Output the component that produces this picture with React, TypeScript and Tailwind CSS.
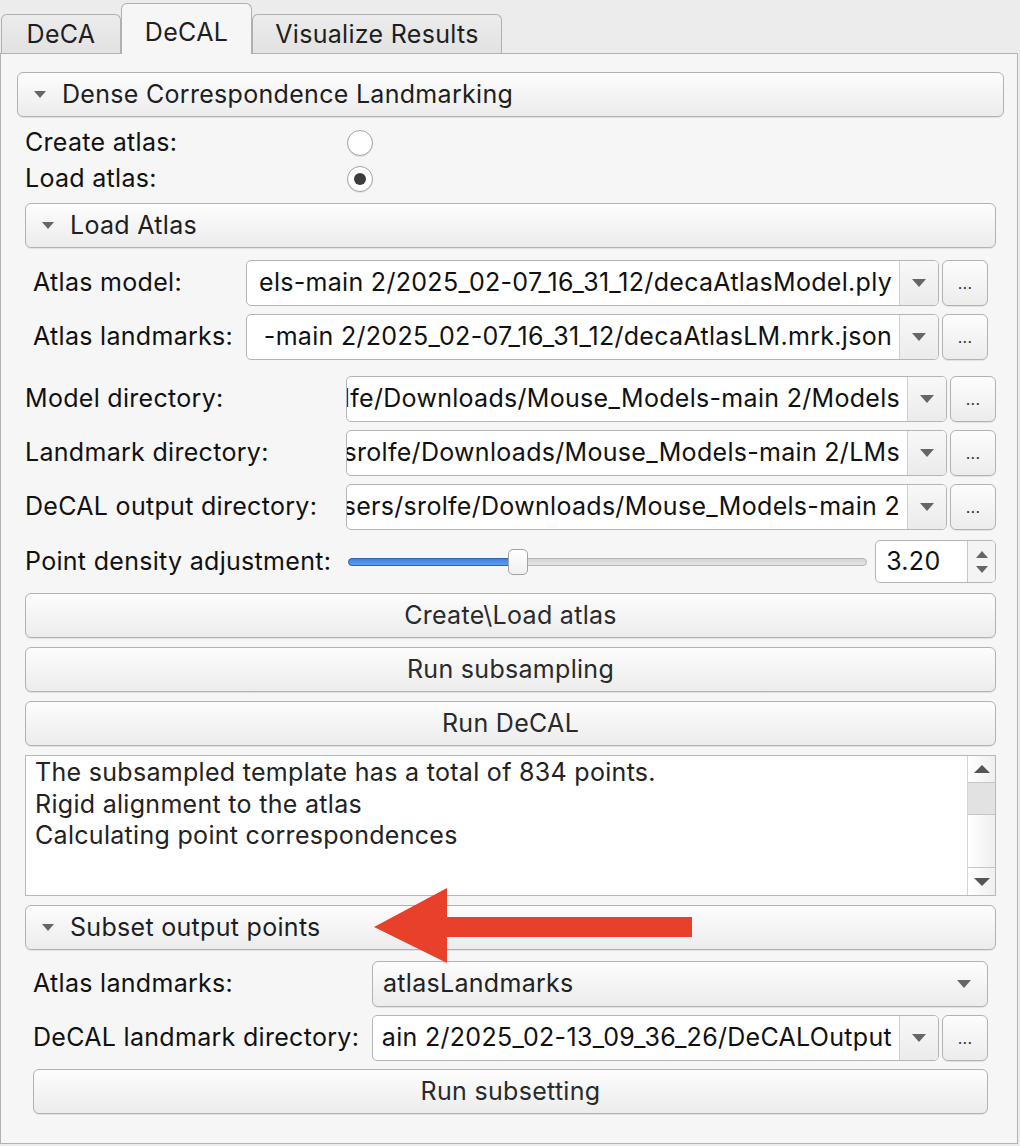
import { ReactNode } from "react";

const FONT = "font-['Inter','Liberation_Sans',sans-serif] tracking-[0.3px]";
const TXT = "text-[25px]";

const BTN =
  "border border-[#b2b2b2] rounded-[6px] bg-gradient-to-b from-[#fdfdfd] to-[#ececec] shadow-[0_1px_0_rgba(0,0,0,0.08)]";

function DownTri({ className = "" }: { className?: string }) {
  return (
    <svg width="14" height="8" viewBox="0 0 14 8" className={className}>
      <path d="M0 0 L14 0 L7 8 Z" fill="#666" />
    </svg>
  );
}

function Tab({ label, active, width }: { label: string; active?: boolean; width: string }) {
  return (
    <div
      className={`${width} flex justify-center border border-[#b0b0b0] rounded-t-[6px] ${
        active
          ? "h-[51px] bg-[#f6f6f6] border-b-0 relative z-10 -mb-px pt-[14px]"
          : "h-[39px] bg-gradient-to-b from-[#ececec] to-[#e2e2e2] border-b-0 pt-[5px]"
      }`}
    >
      <span className={`${TXT} leading-[28px] text-[#1e1e1e]`}>{label}</span>
    </div>
  );
}

function SectionHeader({ label }: { label: string }) {
  return (
    <div className={`${BTN} h-[45px] flex items-center pl-[16px] gap-[16px]`}>
      <DownTri className="w-[12px] h-[7px]" />
      <span className={`${TXT} text-[#1e1e1e]`}>{label}</span>
    </div>
  );
}

function EditCombo({ text }: { text: string }) {
  return (
    <div className="flex-1 min-w-0 h-[46px] flex border border-[#b5b5b5] rounded-[5px] bg-white overflow-hidden">
      <div className="flex-1 min-w-0 flex justify-end items-center overflow-hidden pr-[7px]">
        <span className={`shrink-0 whitespace-nowrap ${TXT} text-[#111]`}>{text}</span>
      </div>
      <div className="w-[39px] shrink-0 border-l border-[#d0d0d0] bg-gradient-to-b from-[#f8f8f8] to-[#ebebeb] flex items-center justify-center">
        <DownTri />
      </div>
    </div>
  );
}

function Dots() {
  return (
    <div className={`${BTN} w-[46px] h-[46px] shrink-0 flex items-center justify-center`}>
      <span className="text-[16px] text-[#333] leading-none">...</span>
    </div>
  );
}

function Row({ label, w, children }: { label: string; w: string; children: ReactNode }) {
  return (
    <div className="flex items-center h-[46px]">
      <div className={`${w} shrink-0 ${TXT} text-[#111]`}>{label}</div>
      <div className="flex-1 min-w-0 flex gap-[3px]">{children}</div>
    </div>
  );
}

function PushButton({ label }: { label: string }) {
  return (
    <div className={`${BTN} h-[45px] flex items-center justify-center`}>
      <span className={`${TXT} text-[#2a2a2a]`}>{label}</span>
    </div>
  );
}

function Radio({ checked }: { checked?: boolean }) {
  return (
    <div className="w-[26px] h-[26px] rounded-full border-[1.5px] border-[#a4a4a4] bg-white flex items-center justify-center shadow-[0_1px_1px_rgba(0,0,0,0.08)]">
      {checked && <div className="w-[12px] h-[12px] rounded-full bg-[#3c3c3c]" />}
    </div>
  );
}

export default function App() {
  return (
    <div className={`${FONT} relative w-[1020px] h-[1146px] bg-[#ececec] overflow-hidden flex flex-col`}>
      {/* Tabs */}
      <div className="h-[53px] flex items-end pl-[1px]">
        <Tab label="DeCA" width="w-[120px]" />
        <Tab label="DeCAL" width="w-[131px]" active />
        <Tab label="Visualize Results" width="w-[250px]" />
      </div>

      {/* Panel */}
      <div className="w-[1018px] h-[1091px] border border-[#b3b3b3] bg-[#f6f6f6] pl-[16px] pr-[13px] pt-[18px]">
        <SectionHeader label="Dense Correspondence Landmarking" />

        <div className="px-[8px]">
          <div className="mt-[8px] flex items-center h-[36px]">
            <div className={`w-[322px] ${TXT} text-[#111]`}>Create atlas:</div>
            <Radio />
          </div>
          <div className="flex items-center h-[36px]">
            <div className={`w-[322px] ${TXT} text-[#111]`}>Load atlas:</div>
            <Radio checked />
          </div>

          <div className="mt-[6px]">
            <SectionHeader label="Load Atlas" />
          </div>
          <div className="px-[8px] mt-[12px] flex flex-col gap-[8px]">
            <Row label="Atlas model:" w="w-[213px]">
              <EditCombo text="els-main 2/2025_02-07_16_31_12/decaAtlasModel.ply" />
              <Dots />
            </Row>
            <Row label="Atlas landmarks:" w="w-[213px]">
              <EditCombo text="-main 2/2025_02-07_16_31_12/decaAtlasLM.mrk.json" />
              <Dots />
            </Row>
          </div>

          <div className="mt-[16px] flex flex-col gap-[8px]">
            <Row label="Model directory:" w="w-[321px]">
              <EditCombo text="lfe/Downloads/Mouse_Models-main 2/Models" />
              <Dots />
            </Row>
            <Row label="Landmark directory:" w="w-[321px]">
              <EditCombo text="'srolfe/Downloads/Mouse_Models-main 2/LMs" />
              <Dots />
            </Row>
            <Row label="DeCAL output directory:" w="w-[321px]">
              <EditCombo text="sers/srolfe/Downloads/Mouse_Models-main 2" />
              <Dots />
            </Row>
          </div>

          {/* Slider */}
          <div className="mt-[10px] h-[43px] flex items-center">
            <div className={`w-[323px] shrink-0 ${TXT} text-[#111]`}>Point density adjustment:</div>
            <div className="w-[520px] h-[26px] relative flex items-center">
              <div className="w-full h-[8px] rounded-full border border-[#b4b4b4] bg-gradient-to-b from-[#d4d4d4] to-[#e6e6e6]" />
              <div className="absolute left-0 w-[166px] h-[8px] rounded-l-full border border-[#2d64b4] bg-gradient-to-b from-[#3f82e0] to-[#5d9df0]" />
              <div className="absolute left-[160px] w-[20px] h-[26px] rounded-[5px] border-[1.5px] border-[#a2a2a2] bg-gradient-to-b from-white to-[#f0f0f0]" />
            </div>
            <div className="ml-[8px] w-[121px] h-[43px] flex border border-[#b5b5b5] rounded-[5px] bg-white overflow-hidden">
              <div className={`flex-1 flex items-center pl-[10px] ${TXT} text-[#111]`}>3.20</div>
              <div className="w-[28px] border-l border-[#c8c8c8] bg-[#f4f4f4] flex flex-col items-center justify-center gap-[8px]">
                <svg width="12" height="7" viewBox="0 0 12 7">
                  <path d="M0 7 L12 7 L6 0 Z" fill="#666" />
                </svg>
                <svg width="12" height="7" viewBox="0 0 12 7">
                  <path d="M0 0 L12 0 L6 7 Z" fill="#666" />
                </svg>
              </div>
            </div>
          </div>

          <div className="mt-[10px] flex flex-col gap-[9px]">
            <PushButton label="Create\Load atlas" />
            <PushButton label="Run subsampling" />
            <PushButton label="Run DeCAL" />
          </div>

          {/* Log */}
          <div className="mt-[9px] h-[141px] flex border border-[#b8b8b8] bg-white">
            <div className={`flex-1 pl-[9px] pt-[1px] ${TXT} leading-[31.5px] text-[#222]`}>
              <div>The subsampled template has a total of 834 points.</div>
              <div>Rigid alignment to the atlas</div>
              <div>Calculating point correspondences</div>
            </div>
            <div className="w-[28px] border-l border-[#d4d4d4] flex flex-col bg-gradient-to-r from-white to-[#efefef]">
              <div className="h-[27px] flex items-center justify-center border-b border-[#c6c6c6]">
                <svg width="16" height="8" viewBox="0 0 16 8">
                  <path d="M0 8 L16 8 L8 0 Z" fill="#555" />
                </svg>
              </div>
              <div className="h-[32px] bg-[#e2e2e2] border-b border-[#c6c6c6]" />
              <div className="flex-1" />
              <div className="h-[28px] flex items-center justify-center border-t border-[#c6c6c6]">
                <svg width="16" height="8" viewBox="0 0 16 8">
                  <path d="M0 0 L16 0 L8 8 Z" fill="#555" />
                </svg>
              </div>
            </div>
          </div>

          <div className="mt-[9px]">
            <SectionHeader label="Subset output points" />
          </div>
          <div className="px-[8px] mt-[11px] flex flex-col gap-[8px]">
            <Row label="Atlas landmarks:" w="w-[339px]">
              <div className={`${BTN} flex-1 h-[46px] flex items-center pl-[10px] pr-[16px]`}>
                <span className={`flex-1 ${TXT} text-[#222]`}>atlasLandmarks</span>
                <DownTri />
              </div>
            </Row>
            <Row label="DeCAL landmark directory:" w="w-[339px]">
              <EditCombo text="ain 2/2025_02-13_09_36_26/DeCALOutput" />
              <Dots />
            </Row>
            <PushButton label="Run subsetting" />
          </div>
        </div>
      </div>

      {/* Annotation arrow */}
      <svg className="absolute left-0 top-0 pointer-events-none" width="1020" height="1146">
        <polygon
          points="374,927 447,888 447,917 692,917 692,937 447,937 447,963"
          fill="#e8412b"
        />
      </svg>
    </div>
  );
}
